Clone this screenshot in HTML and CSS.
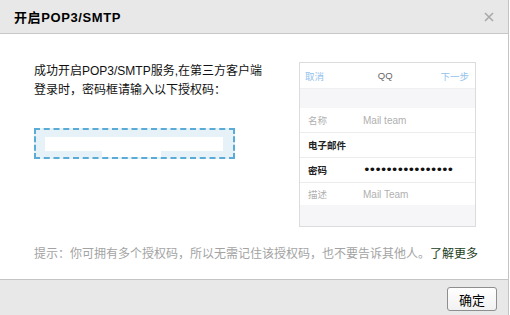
FILE: index.html
```html
<!DOCTYPE html>
<html lang="zh-CN">
<head>
<meta charset="UTF-8" />
<title>开启POP3/SMTP</title>
<link rel="stylesheet" href="styles.css">
</head>
<body>
<div class="dialog">
    <div class="dlg-head">
        <span class="dlg-title">开启POP3/SMTP</span>
        <svg class="dlg-close" width="10" height="10" viewBox="0 0 10 10">
            <path d="M1 1L9 9M9 1L1 9" stroke="#a9a9a9" stroke-width="1.6" fill="none" />
        </svg>
    </div>

    <div class="dlg-body">
        <div class="main">
            <div class="left">
                <p class="desc">成功开启POP3/SMTP服务,在第三方客户端<br>登录时，密码框请输入以下授权码：</p>
                <div class="code">
                    <div class="mask-a"></div>
                    <div class="mask-b"></div>
                </div>
            </div>

            <div class="phone">
                <div class="ph-bar">
                    <span class="ph-link">取消</span>
                    <span class="ph-name">QQ</span>
                    <span class="ph-link">下一步</span>
                </div>
                <div class="ph-gap"></div>
                <div class="ph-row">
                    <span class="ph-label dim">名称</span>
                    <span class="ph-val">Mail team</span>
                </div>
                <div class="ph-row">
                    <span class="ph-label">电子邮件</span>
                    <span class="ph-val"></span>
                </div>
                <div class="ph-row">
                    <span class="ph-label">密码</span>
                    <span class="ph-val dots">••••••••••••••••</span>
                </div>
                <div class="ph-row last">
                    <span class="ph-label dim">描述</span>
                    <span class="ph-val">Mail Team</span>
                </div>
                <div class="ph-foot"></div>
            </div>
        </div>

        <p class="tip">提示：你可拥有多个授权码，所以无需记住该授权码，也不要告诉其他人。<a class="more" href="#">了解更多</a></p>
    </div>

    <div class="dlg-foot">
        <button class="btn">确定</button>
    </div>
</div>
</body>
</html>
```

FILE: styles.css
```css
body {
    margin: 0;
    background: #fff;
    font-family: "Liberation Sans", "Noto Sans CJK SC", sans-serif;
    color: #000;
}
.dialog {
    width: 508px;
    height: 315px;
    border-right: 1px solid #c4c4c4;
    display: flex;
    flex-direction: column;
}
.dlg-head {
    height: 33px;
    background: #e8e8e8;
    border-bottom: 1px solid #c8c8c8;
    display: flex;
    align-items: center;
    justify-content: space-between;
    padding: 0 14px;
}
.dlg-title {
    font-size: 13px;
    font-weight: bold;
    letter-spacing: 0.6px;
}
.dlg-close {
    display: block;
}
.dlg-body {
    flex: 1;
    padding: 28px 0 0 34px;
}
.main {
    display: flex;
}
.left {
    width: 265px;
}
.desc {
    margin: 0;
    font-size: 12px;
    line-height: 19px;
    color: #111;
    white-space: nowrap;
}
.code {
    margin-top: 28px;
    width: 197px;
    height: 27px;
    border: 2px dashed #5aabd6;
    background: #e6f1f8;
}
.mask-a {
    margin: 7px 0 0 9px;
    width: 178px;
    height: 14px;
    background: #fff;
}
.mask-b {
    margin-left: 66px;
    width: 59px;
    height: 6px;
    background: #fff;
}
.phone {
    width: 175px;
    border: 1px solid #dcdcdc;
    font-size: 9.5px;
    background: #f6f6f8;
}
.ph-bar {
    height: 25px;
    background: #fff;
    display: flex;
    align-items: center;
    justify-content: space-between;
    padding: 0 6px 0 5px;
}
.ph-link {
    color: #93c2ec;
}
.ph-name {
    color: #666;
    margin-left: 6px;
}
.ph-gap {
    height: 19px;
    border-top: 1px solid #f0f0f0;
}
.ph-row {
    height: 24px;
    background: #fff;
    display: flex;
    align-items: center;
    padding-left: 8px;
}
.ph-row + .ph-row {
    border-top: 1px solid #ececec;
}
.ph-row.last {
    height: 22px;
}
.ph-label {
    width: 55px;
    color: #222;
    font-weight: bold;
}
.ph-label.dim {
    color: #b0b0b0;
    font-weight: normal;
}
.ph-val {
    color: #b0b0b0;
    font-size: 10px;
}
.ph-val.dots {
    color: #111;
    font-family: "DejaVu Sans", sans-serif;
    font-size: 13px;
    line-height: 10px;
    letter-spacing: -2.1px;
}
.ph-foot {
    height: 21px;
}
.tip {
    margin: 18px 0 0;
    font-size: 12px;
    line-height: 18px;
    color: #a3a3a3;
    white-space: nowrap;
}
.more {
    color: #22401c;
    text-decoration: none;
}
.dlg-foot {
    height: 35px;
    background: #e8e8e8;
    border-top: 1px solid #c4c4c4;
    display: flex;
    justify-content: flex-end;
    align-items: flex-start;
    padding-right: 11px;
}
.btn {
    margin-top: 7px;
    width: 50px;
    height: 24px;
    padding: 0;
    border: 1px solid #8e8e8e;
    border-radius: 3px;
    background: linear-gradient(#fff, #f1f1f1);
    font-family: "Noto Sans CJK SC", sans-serif;
    font-size: 13px;
    color: #000;
}
```
